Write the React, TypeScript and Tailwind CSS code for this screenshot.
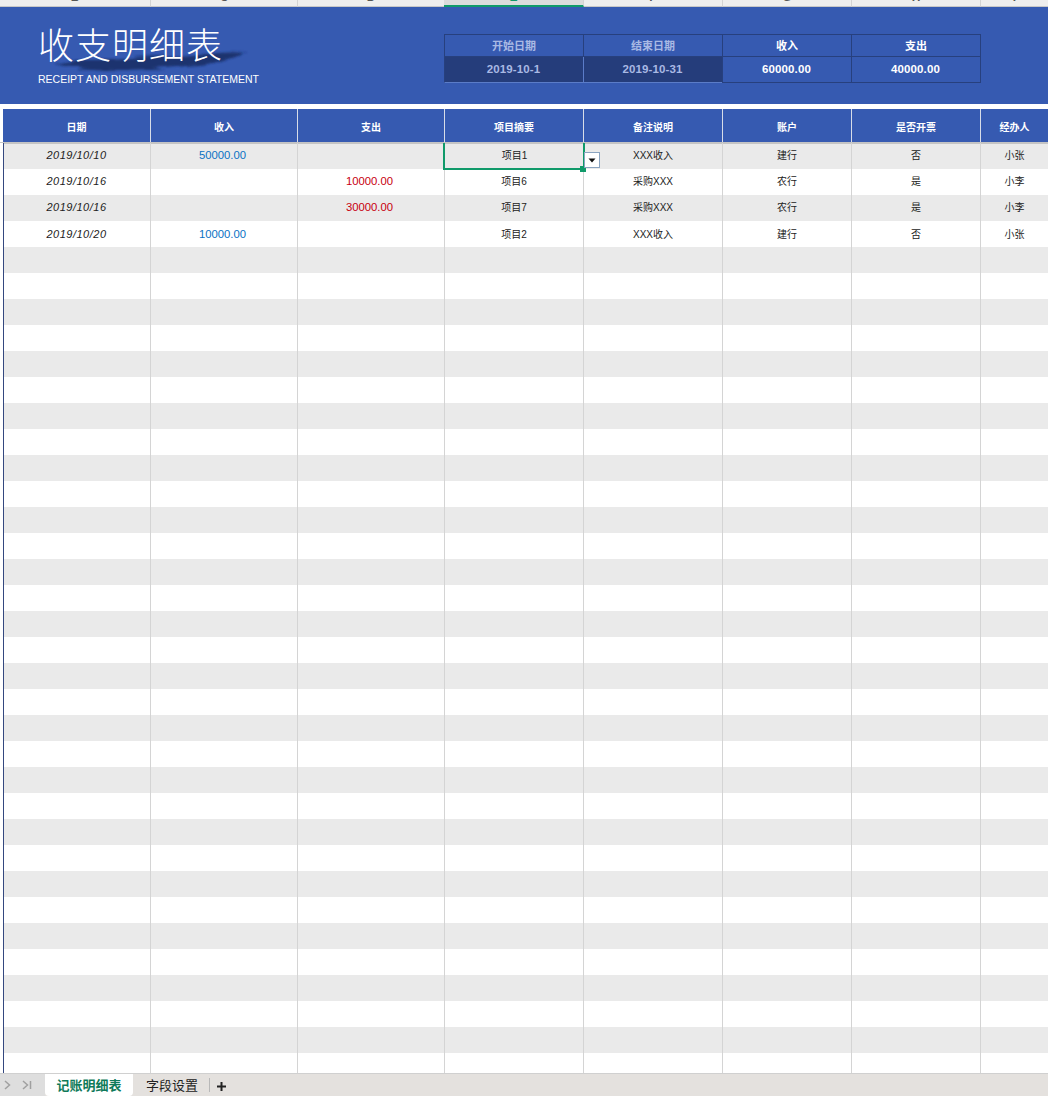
const font = "font-['Liberation_Sans','Noto_Sans_CJK_SC',sans-serif]";

const headColumns = "grid grid-cols-[148px_147px_147px_139px_139px_129px_129px_1fr]";
const bodyColumns = "grid grid-cols-[147px_147px_147px_139px_139px_129px_129px_1fr]";
const letterColumns = "grid grid-cols-[151px_147px_147px_139px_139px_129px_129px_1fr]";

const letters = ["B", "C", "D", "E", "F", "G", "H", "I"];
const heads = ["日期", "收入", "支出", "项目摘要", "备注说明", "账户", "是否开票", "经办人"];

const data = [
  { date: "2019/10/10", income: "50000.00", out: "", item: "项目1", note: "XXX收入", acct: "建行", inv: "否", who: "小张" },
  { date: "2019/10/16", income: "", out: "10000.00", item: "项目6", note: "采购XXX", acct: "农行", inv: "是", who: "小李" },
  { date: "2019/10/16", income: "", out: "30000.00", item: "项目7", note: "采购XXX", acct: "农行", inv: "是", who: "小李" },
  { date: "2019/10/20", income: "10000.00", out: "", item: "项目2", note: "XXX收入", acct: "建行", inv: "否", who: "小张" },
];

const emptyRows = Array.from({ length: 32 }, (_, i) => i);

function Cell({ children, className = "text-[10px] text-[#222]" }: { children?: React.ReactNode; className?: string }) {
  return (
    <div className={`flex h-[26px] items-center justify-center border-r border-[#d4d4d4] last:border-r-0 ${className}`}>
      {children}
    </div>
  );
}

function SelectedCell({ children }: { children: React.ReactNode }) {
  return (
    <div className="relative flex h-[26px] items-center justify-center pb-[1px] text-[10px] text-[#222]">
      {children}
      <div className="absolute -left-[2px] -top-[2px] -right-[1px] bottom-[-1px] border-2 border-[#109a6a]" />
      <div className="absolute -bottom-[3px] -right-[2px] size-[6px] bg-[#109a6a]" />
      <div className="absolute -right-[16px] top-[9px] flex size-[16px] items-center justify-center border border-[#8aa4c0] bg-white">
        <svg width="8" height="5" viewBox="0 0 8 5">
          <path d="M0.5 0.5H7.5L4 4.5Z" fill="#111" />
        </svg>
      </div>
    </div>
  );
}

function Summary() {
  const label = "flex h-[23px] items-center justify-center pt-[1px] text-[11px]";
  const value = "flex h-[26px] items-center justify-center pr-[1px] pt-[1px] text-[11.5px] tracking-[0.1px]";
  return (
    <div className="grid w-[537px] grid-cols-[139px_139px_129px_130px] font-bold">
      <div className={`${label} border-y border-l border-[#27407e] text-[#a9b9e4]`}>开始日期</div>
      <div className={`${label} border-y border-l border-[#27407e] text-[#a9b9e4]`}>结束日期</div>
      <div className={`${label} border-y border-l border-[#27407e] text-white`}>收入</div>
      <div className={`${label} border border-[#27407e] text-white`}>支出</div>
      <div className={`${value} border-b border-l border-b-[#5b7cc8] border-l-[#27407e] bg-[#253d7b] text-[#a9b9e4]`}>2019-10-1</div>
      <div className={`${value} border-b border-l border-[#5b7cc8] bg-[#253d7b] text-[#a9b9e4]`}>2019-10-31</div>
      <div className={`${value} border-b border-l border-[#27407e] text-white`}>60000.00</div>
      <div className={`${value} border-x border-b border-[#27407e] text-white`}>40000.00</div>
    </div>
  );
}

function Wash() {
  return (
    <svg className="absolute left-[48px] top-[30px]" width="200" height="36" viewBox="0 0 200 36">
      <defs>
        <filter id="wash" x="-10%" y="-50%" width="120%" height="200%">
          <feTurbulence type="fractalNoise" baseFrequency="0.03 0.35" numOctaves="2" seed="4" result="noise" />
          <feDisplacementMap in="SourceGraphic" in2="noise" scale="7" xChannelSelector="R" yChannelSelector="G" />
          <feGaussianBlur stdDeviation="1.3" />
        </filter>
      </defs>
      <path
        d="M4 27 C30 21 55 25 80 21 C110 17 130 22 150 18 C165 14 180 14 194 15 C182 22 160 28 135 29 C100 33 40 36 4 27Z"
        fill="#15295f"
        opacity="0.8"
        filter="url(#wash)"
      />
    </svg>
  );
}

export default function App() {
  return (
    <div className={`flex h-[1096px] w-[1048px] flex-col overflow-hidden bg-white ${font}`}>
      {/* column letters, cut off by the top of the window */}
      <div className={`${letterColumns} h-[7px] overflow-hidden bg-[#eeeeee] text-[12px] leading-[12px] text-[#555]`}>
        {letters.map((l) => (
          <div
            key={l}
            className={
              l === "E"
                ? "-ml-px flex h-[7px] justify-center border-r border-b-2 border-r-[#d4d4d4] border-b-[#109a6a] bg-[#dcdcdc] text-[#109a6a]"
                : "flex h-[7px] justify-center border-r border-b border-r-[#d4d4d4] border-b-[#c8c8c8] last:border-r-0"
            }
          >
            <span className="-mt-[9px] font-bold">{l}</span>
          </div>
        ))}
      </div>

      <div className="flex h-[97px] items-start bg-[#365ab1] pl-[3px]">
        <div className="relative w-[441px] pl-[35px] pt-[19px]">
          <Wash />
          <h1 className="relative text-[36px] font-light leading-[42px] tracking-[1px] text-white">收支明细表</h1>
          <p className="relative mt-[4px] text-[10.5px] leading-[14px] text-white">RECEIPT AND DISBURSEMENT STATEMENT</p>
        </div>
        <div className="mt-[27px]">
          <Summary />
        </div>
      </div>

      <div className="h-[5px] bg-white" />

      <div className="pl-[3px]">
        <div className={`${headColumns} h-[33px] bg-[#365ab1] text-[10px] font-bold text-white`}>
          {heads.map((h) => (
            <div key={h} className="flex items-center justify-center border-r border-[#d8dde8] pt-[3px] last:border-r-0">
              {h}
            </div>
          ))}
        </div>
      </div>
      <div className="h-[1px] bg-[#c4c4c4]" />

      <div className="min-h-0 flex-1 overflow-hidden pl-[3px]">
        <div className="h-full border-l border-l-[#34487f]">
          {data.map((r, i) => {
            const text = i < 3 ? "pb-[1px] text-[10px] text-[#222]" : "text-[10px] text-[#222]";
            const nums = i < 3 ? "pb-[1px] text-[11.3px]" : "text-[11.3px]";
            return (
              <div
                key={i}
                className={`${bodyColumns} ${i % 2 === 0 ? "bg-[#eaeaea]" : "bg-white"} ${i === 0 ? "shadow-[inset_0_1px_0_#c4c4c4]" : ""}`}
              >
                <Cell className={`${i < 3 ? "pb-[1px]" : ""} pr-[1px] text-[11px] italic tracking-[0.5px] text-[#222]`}>{r.date}</Cell>
                <Cell className={`${nums} pr-[3px] text-[#0a72c4]`}>{r.income}</Cell>
                <Cell className={`${nums} pr-[3px] text-[#c8000f]`}>{r.out}</Cell>
                {i === 0 ? <SelectedCell>{r.item}</SelectedCell> : <Cell className={text}>{r.item}</Cell>}
                <Cell className={text}>{r.note}</Cell>
                <Cell className={text}>{r.acct}</Cell>
                <Cell className={text}>{r.inv}</Cell>
                <Cell className={text}>{r.who}</Cell>
              </div>
            );
          })}
          {emptyRows.map((i) => (
            <div key={i} className={`${bodyColumns} ${i % 2 === 0 ? "bg-[#eaeaea]" : "bg-white"}`}>
              {heads.map((h) => (
                <Cell key={h} />
              ))}
            </div>
          ))}
        </div>
      </div>

      <div className="flex h-[23px] items-stretch border-t border-[#d0d0d0] bg-[#e4e1de] text-[13px] text-[#222]">
        <div className="flex w-[45px] items-center gap-[11px] bg-[#dedede] pl-[4px]">
          <svg width="7" height="10" viewBox="0 0 7 10" fill="none" stroke="#a0a0a0" strokeWidth="1.5">
            <path d="M1 1L5.5 5L1 9" />
          </svg>
          <svg width="10" height="10" viewBox="0 0 10 10" fill="none" stroke="#a0a0a0" strokeWidth="1.5">
            <path d="M1 1L5.5 5L1 9M8.5 1V9" />
          </svg>
        </div>
        <div className="flex w-[88px] items-center justify-center rounded-b-[4px] bg-white pt-[2px] font-bold text-[#0f7a5a]">记账明细表</div>
        <div className="flex w-[76px] items-center justify-center pl-[2px] pt-[2px]">字段设置</div>
        <div className="my-[4px] w-px bg-[#b8b8b8]" />
        <div className="flex w-[22px] items-center justify-center pt-[2px]">
          <svg width="11" height="11" viewBox="0 0 11 11" stroke="#222" strokeWidth="2">
            <path d="M5.5 1V10M1 5.5H10" />
          </svg>
        </div>
      </div>
    </div>
  );
}
